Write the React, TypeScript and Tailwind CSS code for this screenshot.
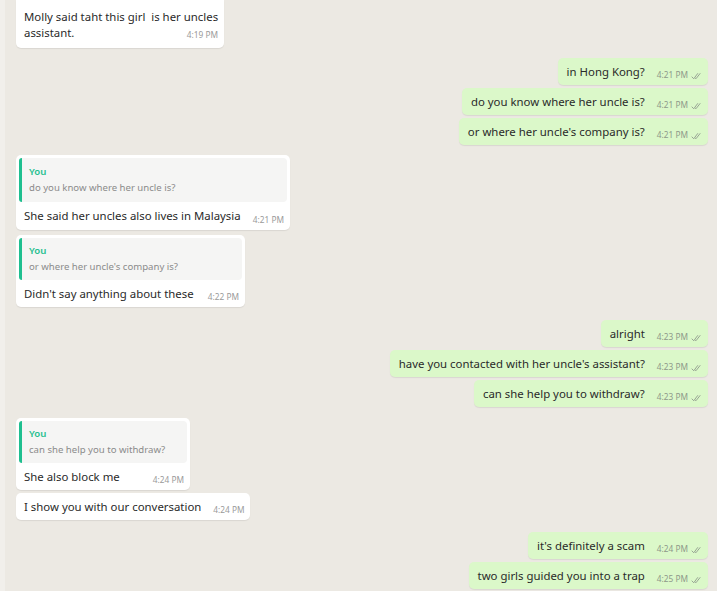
import React from "react";

const Checks = () => (
  <svg width="11" height="8" viewBox="0 0 16 11" className="ml-[3px] inline-block">
    <path d="M1 6.5 L4 9.5 L10 1.5" fill="none" stroke="#8f9a8c" strokeWidth="1.3" />
    <path d="M6 8.5 L7.2 9.5 L13.5 1.5" fill="none" stroke="#8f9a8c" strokeWidth="1.3" />
  </svg>
);

type Sent = { text: string; time: string; mt: string };

const SentMsg = ({ text, time, mt }: Sent) => (
  <div className={`flex justify-end pr-[9px] ${mt}`}>
    <div className="flex h-[27px] items-center whitespace-nowrap rounded-[5px] bg-[#dbf8c9] pl-[9px] pr-[6px] shadow-[0_1px_1px_rgba(0,0,0,0.08)]">
      <span className="text-[11.4px] text-[#2a2a2a]">{text}</span>
      <span className="ml-[12px] mt-[8px] flex items-center text-[8.3px] text-[#8e998a]">
        {time}
        <Checks />
      </span>
    </div>
  </div>
);

const Quoted = ({
  quote,
  text,
  time,
  mt,
  w,
  qh,
  rh,
}: {
  quote: string;
  text: string;
  time: string;
  mt: string;
  w: string;
  qh: string;
  rh: string;
}) => (
  <div className={`flex pl-[16px] ${mt}`}>
    <div className={`whitespace-nowrap rounded-[5px] bg-white px-[3px] pt-[3px] shadow-[0_1px_1px_rgba(0,0,0,0.08)] ${w}`}>
      <div className="flex rounded-[4px] bg-[#f5f5f4]">
        <div className="w-[3px] rounded-l-[4px] bg-[#1fbf8f]" />
        <div className={`flex flex-col justify-center pl-[7px] ${qh}`}>
          <span className="text-[9.6px] font-semibold leading-[14px] text-[#1fbf8f]">You</span>
          <span className="mt-[2px] text-[9.6px] leading-[14px] text-[#8b8b8b]">{quote}</span>
        </div>
      </div>
      <div className={`flex items-center justify-between pl-[5px] pr-[3px] ${rh}`}>
        <span className="text-[11.4px] text-[#2a2a2a]">{text}</span>
        <span className="ml-[12px] mt-[8px] text-[8.3px] text-[#9a9a9a]">{time}</span>
      </div>
    </div>
  </div>
);

export default function App() {
  return (
    <div
      className="relative h-[591px] w-[717px] overflow-hidden bg-[#ece9e3]"
      style={{ fontFamily: '"Noto Sans", "Open Sans", sans-serif' }}
    >
      <div className="absolute left-0 top-0 h-full w-[5px] bg-[#f1efeb]" />
      <div className="flex flex-col">
        <div className="flex pl-[16px]">
          <div className="h-[48px] w-[208px] whitespace-nowrap rounded-b-[5px] bg-white pl-[8px] pr-[6px] pt-[9px] shadow-[0_1px_1px_rgba(0,0,0,0.08)]">
            <div className="text-[11.4px] leading-[16px] text-[#2a2a2a]">
              Molly said taht this girl&nbsp; is her uncles
            </div>
            <div className="flex items-end justify-between">
              <span className="text-[11.4px] leading-[16px] text-[#2a2a2a]">assistant.</span>
              <span className="mt-[4px] text-[8.3px] text-[#9a9a9a]">4:19 PM</span>
            </div>
          </div>
        </div>

        <SentMsg text="in Hong Kong?" time="4:21 PM" mt="mt-[10px]" />
        <SentMsg text="do you know where her uncle is?" time="4:21 PM" mt="mt-[3px]" />
        <SentMsg text="or where her uncle's company is?" time="4:21 PM" mt="mt-[3px]" />

        <Quoted
          quote="do you know where her uncle is?"
          text="She said her uncles also lives in Malaysia"
          time="4:21 PM"
          mt="mt-[10px]"
          w="w-[274px]"
          qh="h-[44px]"
          rh="h-[28px]"
        />
        <Quoted
          quote="or where her uncle's company is?"
          text="Didn't say anything about these"
          time="4:22 PM"
          mt="mt-[5px]"
          w="w-[229px]"
          qh="h-[42px]"
          rh="h-[27px]"
        />

        <SentMsg text="alright" time="4:23 PM" mt="mt-[13px]" />
        <SentMsg text="have you contacted with her uncle's assistant?" time="4:23 PM" mt="mt-[3px]" />
        <SentMsg text="can she help you to withdraw?" time="4:23 PM" mt="mt-[3px]" />

        <Quoted
          quote="can she help you to withdraw?"
          text="She also block me"
          time="4:24 PM"
          mt="mt-[11px]"
          w="w-[174px]"
          qh="h-[42px]"
          rh="h-[27px]"
        />
        <div className="mt-[3px] flex pl-[16px]">
          <div className="flex h-[27px] items-center whitespace-nowrap rounded-[5px] bg-white pl-[8px] pr-[5px] shadow-[0_1px_1px_rgba(0,0,0,0.08)]">
            <span className="text-[11.4px] text-[#2a2a2a]">I show you with our conversation</span>
            <span className="ml-[12px] mt-[8px] text-[8.3px] text-[#9a9a9a]">4:24 PM</span>
          </div>
        </div>

        <SentMsg text="it's definitely a scam" time="4:24 PM" mt="mt-[12px]" />
        <SentMsg text="two girls guided you into a trap" time="4:25 PM" mt="mt-[3px]" />
      </div>
    </div>
  );
}
